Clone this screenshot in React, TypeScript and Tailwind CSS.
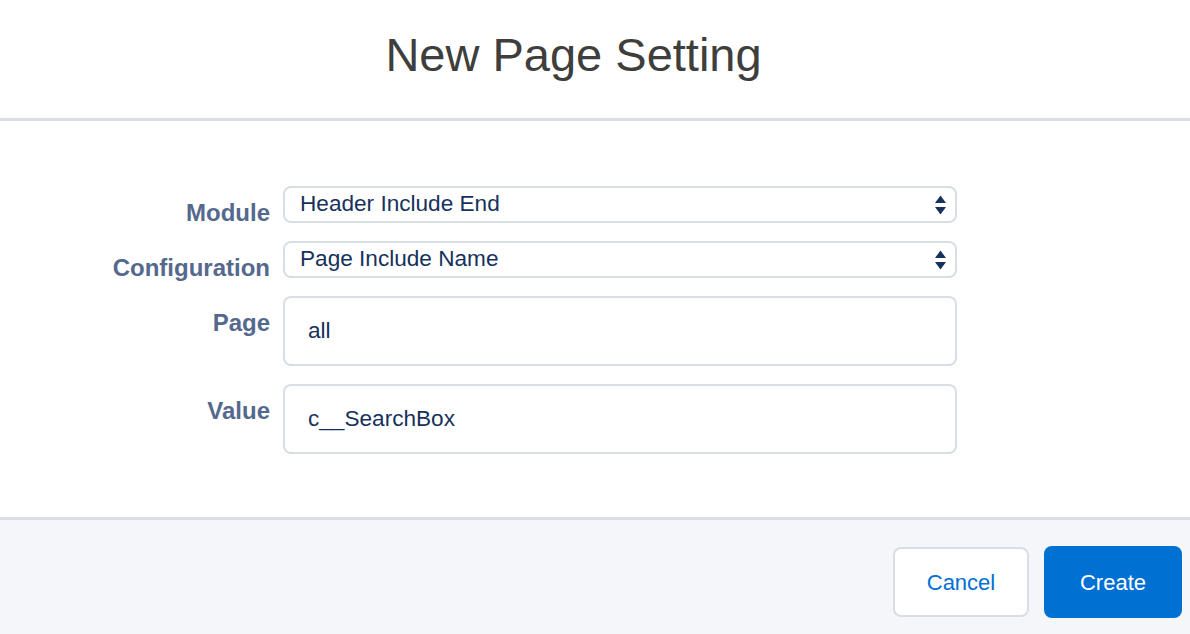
const SelectArrows = () => (
  <svg
    className="pointer-events-none absolute right-[9px] top-1/2 -translate-y-1/2"
    width="11"
    height="19"
    viewBox="0 0 11 19"
  >
    <path d="M5.5 0 L11 7.5 L0 7.5 Z" fill="#16325c" />
    <path d="M0 11.5 L11 11.5 L5.5 19 Z" fill="#16325c" />
  </svg>
);

type FieldProps = {
  label: string;
  children: React.ReactNode;
};

const Field = ({ label, children }: FieldProps) => (
  <>
    <label className="-mb-[12px] pt-[13px] text-right text-[24px] font-bold leading-[28px] text-[#54698d]">
      {label}
    </label>
    {children}
  </>
);

const SelectBox = ({ value }: { value: string }) => (
  <div className="relative flex h-[37px] items-center rounded-[8px] border-2 border-[#d8dde6] bg-white pl-[15px] text-[22.6px] text-[#16325c]">
    <span className="leading-none">{value}</span>
    <SelectArrows />
  </div>
);

const TextBox = ({ value }: { value: string }) => (
  <div className="flex h-[70px] items-center rounded-[8px] border-2 border-[#d8dde6] bg-white pl-[23px] text-[22.6px] text-[#16325c]">
    <span className="leading-none">{value}</span>
  </div>
);

const App = () => {
  return (
    <div className="flex h-[634px] w-[1190px] flex-col bg-white font-['Liberation_Sans',Arial,sans-serif]">
      <header className="flex h-[118px] items-center justify-center pb-[8px] pr-[43px]">
        <h1 className="text-[47px] font-normal leading-[56px] text-[#3e3e3c]">
          New Page Setting
        </h1>
      </header>
      <div className="h-[3px] bg-[#d8dde6]" />

      <main className="h-[396px] pt-[65px]">
        <div className="grid grid-cols-[270px_674px] gap-x-[13px] gap-y-[18px]">
          <Field label="Module">
            <SelectBox value="Header Include End" />
          </Field>
          <Field label="Configuration">
            <SelectBox value="Page Include Name" />
          </Field>
          <Field label="Page">
            <TextBox value="all" />
          </Field>
          <Field label="Value">
            <TextBox value="c__SearchBox" />
          </Field>
        </div>
      </main>

      <div className="h-[3px] bg-[#d8dde6]" />
      <footer className="flex flex-1 items-center justify-end gap-[15px] bg-[#f4f6f9] pt-[10px] pr-[8px]">
        <button className="h-[70px] w-[136px] rounded-[8px] border-2 border-[#d8dde6] bg-white text-[22px] text-[#0070d2]">
          Cancel
        </button>
        <button className="h-[72px] w-[138px] rounded-[8px] bg-[#0070d2] text-[22px] text-white">
          Create
        </button>
      </footer>
    </div>
  );
};

export default App;
